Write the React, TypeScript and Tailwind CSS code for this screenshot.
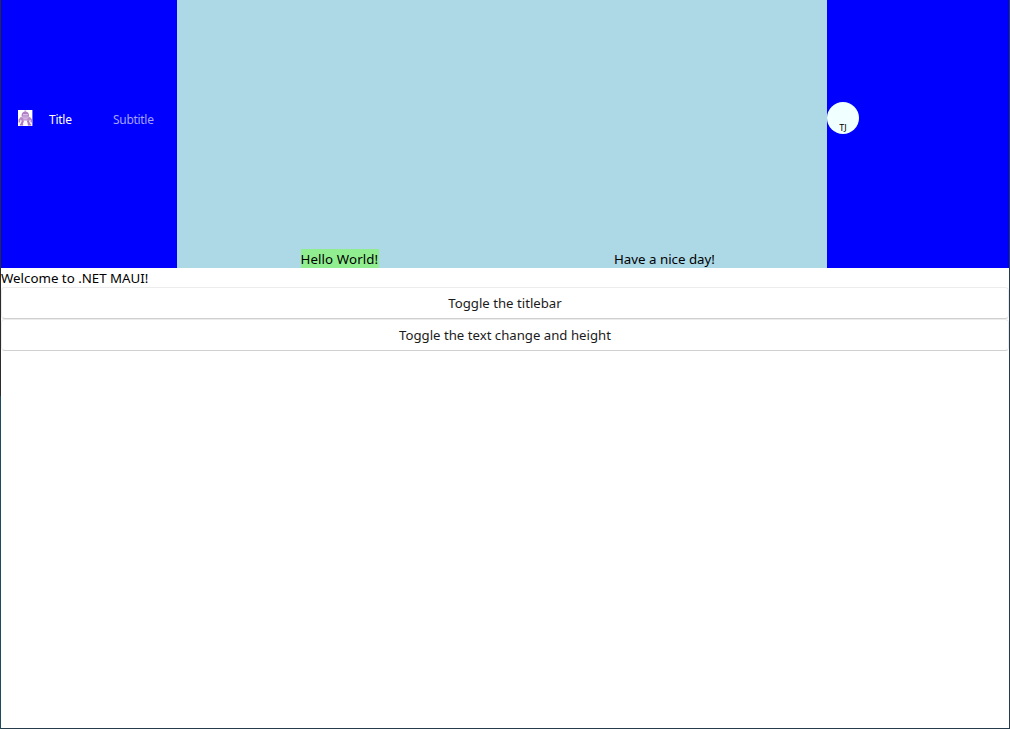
import React from "react";

function BotIcon() {
  return (
    <svg className="block h-4 w-[15px]" viewBox="0 0 15 16" fill="none">
      <path d="M0 0h14.4v16H0z" fill="#fff" />
      <path d="M7.2 .3v1.4" stroke="#c9aad8" strokeWidth="1.4" />
      <path d="M3.6 5.4C3.6 2.9 5.1 1.5 7.3 1.5S11 2.9 11 5.4v1.4H3.6z" fill="#b080c6" />
      <path d="M5 4.8h4.8" stroke="#eadcf1" strokeWidth="1" />
      <path d="M3.4 7.2h8l.8 3.2H2.6z" fill="#b88bcc" />
      <path d="M5.2 8.8h4.4" stroke="#e0cbea" strokeWidth="1" />
      <path d="M3.6 7.4L1.4 10v2.4M11.2 7.4l2.2 2.6v2.4" stroke="#b788cc" strokeWidth="1.8" />
      <path d="M5 10.4L3.4 15M9.8 10.4l1.6 4.6" stroke="#ad7ac3" strokeWidth="2.2" />
      <path d="M1.8 14.6h3.4M9.8 14.6h3.4" stroke="#b07cc6" strokeWidth="1.6" />
    </svg>
  );
}

function TitleBar() {
  return (
    <header className="flex h-[268px] shrink-0 bg-[#0000ff]">
      <div className="flex w-44 shrink-0 items-center pb-8 pl-[17px] text-[12px] leading-4">
        <BotIcon />
        <span className="ml-4 w-16 pt-[3px] tracking-[-0.25px] text-white">Title</span>
        <span className="pt-[3px] tracking-[-0.3px] text-[#a3a3ff]">Subtitle</span>
      </div>
      <div className="flex w-[650px] shrink-0 items-end bg-[#add8e6] text-[13.3px] leading-[19px] text-black">
        <div className="flex w-[325px] justify-center">
          <span className="h-[19px] w-[78px] bg-[#90ee90] pt-px leading-[18px] tracking-[0.1px]">Hello World!</span>
        </div>
        <div className="flex w-[325px] justify-center">
          <span className="h-[19px] w-[101px] pt-px leading-[18px]">Have a nice day!</span>
        </div>
      </div>
      <div className="flex flex-1 items-center pb-8">
        <div className="flex size-8 items-end justify-center rounded-full bg-[#f0ffff] text-[9px] leading-[12px] text-black">
          TJ
        </div>
      </div>
    </header>
  );
}

function Button({ children }: { children: React.ReactNode }) {
  return (
    <button className="block h-8 w-full rounded border border-[#ececec] border-b-[#d0d0d0] bg-white text-center text-[13.2px] leading-[30px] text-[#1b1b1b]">
      {children}
    </button>
  );
}

export default function App() {
  return (
    <div className="flex h-[729px] w-[1010px] overflow-hidden bg-white font-['Noto_Sans',sans-serif] whitespace-nowrap">
      <div className="flex w-px shrink-0 flex-col">
        <div className="h-[396px] bg-[#2b2b2b]" />
        <div className="flex-1 bg-[#204a5e]" />
      </div>
      <div className="flex min-w-0 flex-1 flex-col border-r border-b border-[#263b4b]">
        <TitleBar />
        <main className="flex flex-col">
          <p className="h-[19px] pt-px text-[13.3px] leading-[18px] text-black">Welcome to .NET MAUI!</p>
          <Button>Toggle the titlebar</Button>
          <Button>Toggle the text change and height</Button>
        </main>
      </div>
    </div>
  );
}
